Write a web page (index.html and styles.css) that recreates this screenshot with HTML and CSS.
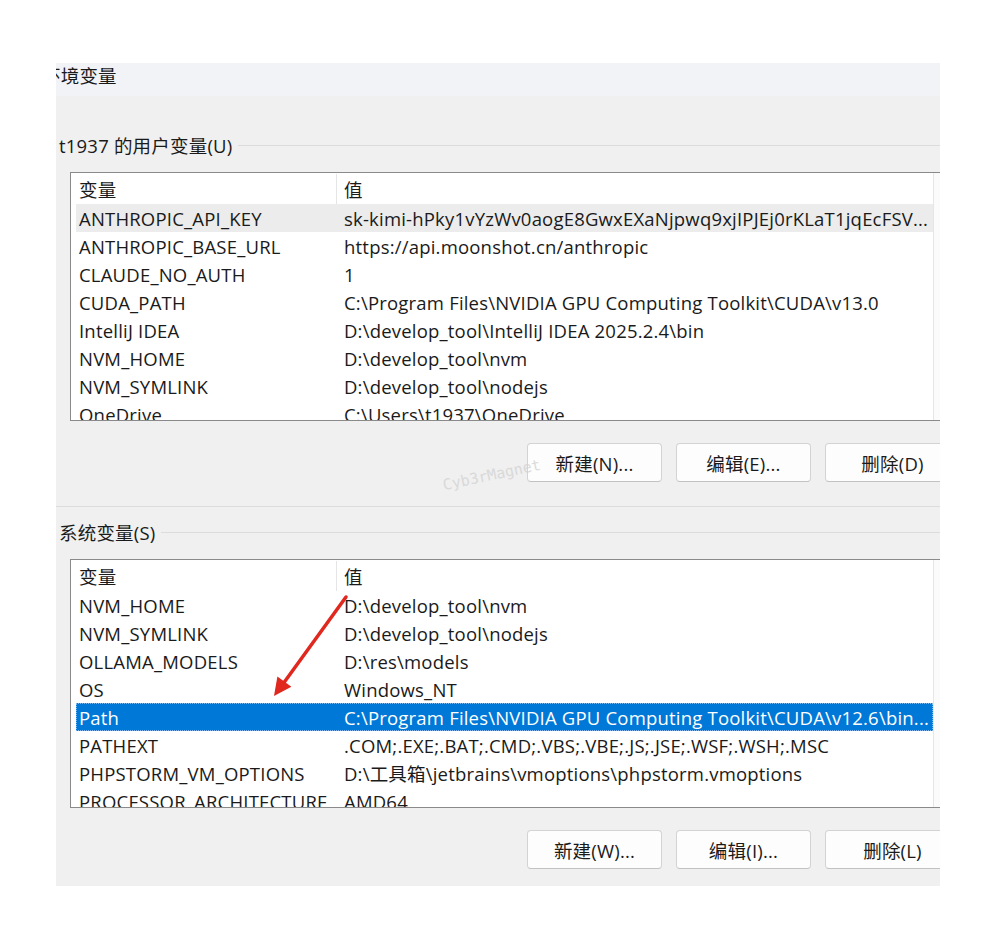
FILE: index.html
```html
<!DOCTYPE html>
<html lang="zh-CN">
<head>
    <meta charset="UTF-8">
    <meta name="viewport" content="width=device-width, initial-scale=1.0">
    <title>环境变量</title>
    <link rel="stylesheet" href="styles.css">
</head>
<body>
    <div class="window">
        <div class="titlebar"><span class="title">环境变量</span></div>

        <div class="dialog">
            <div class="group-label"><span>t1937 的用户变量(U)</span><i class="rule"></i></div>
            <div class="list">
                <div class="list-main">
                    <div class="list-head">
                        <span class="cell name">变量</span>
                        <span class="cell value">值</span>
                    </div>
                    <div class="row soft"><span class="cell name">ANTHROPIC_API_KEY</span><span class="cell value">sk-kimi-hPky1vYzWv0aogE8GwxEXaNjpwq9xjIPJEj0rKLaT1jqEcFSV...</span></div>
                    <div class="row"><span class="cell name">ANTHROPIC_BASE_URL</span><span class="cell value">https://api.moonshot.cn/anthropic</span></div>
                    <div class="row"><span class="cell name">CLAUDE_NO_AUTH</span><span class="cell value">1</span></div>
                    <div class="row"><span class="cell name">CUDA_PATH</span><span class="cell value">C:\Program Files\NVIDIA GPU Computing Toolkit\CUDA\v13.0</span></div>
                    <div class="row"><span class="cell name">IntelliJ IDEA</span><span class="cell value">D:\develop_tool\IntelliJ IDEA 2025.2.4\bin</span></div>
                    <div class="row"><span class="cell name">NVM_HOME</span><span class="cell value">D:\develop_tool\nvm</span></div>
                    <div class="row"><span class="cell name">NVM_SYMLINK</span><span class="cell value">D:\develop_tool\nodejs</span></div>
                    <div class="row"><span class="cell name">OneDrive</span><span class="cell value">C:\Users\t1937\OneDrive</span></div>
                </div>
                <div class="scrollbar"></div>
            </div>
            <div class="buttons">
                <button class="btn">新建(N)...</button>
                <button class="btn">编辑(E)...</button>
                <button class="btn">删除(D)</button>
            </div>

            <div class="divider"></div>

            <div class="group-label system"><span>系统变量(S)</span><i class="rule"></i></div>
            <div class="list">
                <div class="list-main">
                    <div class="list-head">
                        <span class="cell name">变量</span>
                        <span class="cell value">值</span>
                    </div>
                    <div class="row"><span class="cell name">NVM_HOME</span><span class="cell value">D:\develop_tool\nvm</span></div>
                    <div class="row"><span class="cell name">NVM_SYMLINK</span><span class="cell value">D:\develop_tool\nodejs</span></div>
                    <div class="row"><span class="cell name">OLLAMA_MODELS</span><span class="cell value">D:\res\models</span></div>
                    <div class="row"><span class="cell name">OS</span><span class="cell value">Windows_NT</span></div>
                    <div class="row selected"><span class="cell name">Path</span><span class="cell value">C:\Program Files\NVIDIA GPU Computing Toolkit\CUDA\v12.6\bin...</span></div>
                    <div class="row"><span class="cell name">PATHEXT</span><span class="cell value">.COM;.EXE;.BAT;.CMD;.VBS;.VBE;.JS;.JSE;.WSF;.WSH;.MSC</span></div>
                    <div class="row"><span class="cell name">PHPSTORM_VM_OPTIONS</span><span class="cell value">D:\工具箱\jetbrains\vmoptions\phpstorm.vmoptions</span></div>
                    <div class="row"><span class="cell name">PROCESSOR_ARCHITECTURE</span><span class="cell value">AMD64</span></div>
                </div>
                <div class="scrollbar"></div>
            </div>
            <div class="buttons">
                <button class="btn">新建(W)...</button>
                <button class="btn">编辑(I)...</button>
                <button class="btn">删除(L)</button>
            </div>
        </div>

        <span class="watermark">Cyb3rMagnet</span>

        <!-- red pointer towards the Path row -->
        <svg class="pointer" width="884" height="823" viewBox="0 0 884 823">
            <line x1="290" y1="534" x2="228.4" y2="619" stroke="#e0281e" stroke-width="3.5" stroke-linecap="round"/>
            <polygon points="218,633 235.4,623.8 221.4,613.6" fill="#e0281e"/>
        </svg>
    </div>
</body>
</html>
```

FILE: styles.css
```css
* { margin: 0; padding: 0; box-sizing: border-box; }
body { background: #fff; font-family: "Open Sans", "Noto Sans CJK SC", sans-serif; font-size: 18.5px; letter-spacing: 0.2px; color: #1a1a1a; }

.window { position: relative; margin: 63px 0 0 56px; width: 884px; height: 823px; overflow: hidden; background: #f0f0f0; }

.titlebar { height: 33px; background: #f2f3f7; overflow: hidden; white-space: nowrap; }
.title { display: inline-block; margin-left: -14px; line-height: 24px; }

.dialog { padding-top: 37px; }

.group-label { display: flex; align-items: center; height: 24px; padding-left: 3px; white-space: nowrap; }
.group-label .rule { flex: 1; height: 1px; background: #dcdcdc; margin-left: 6px; }
.group-label.system { margin-top: 13px; }

.list { display: flex; margin: 15px 0 0 14px; width: 880px; height: 249px; border: 1px solid #8a8a8a; background: #fff; overflow: hidden; }
.list-main { flex: 1; min-width: 0; padding-left: 5px; }
.scrollbar { width: 16px; border-left: 1px solid #e6e6e6; background: #fbfbfb; }

.list-head { display: flex; height: 31px; align-items: center; }
.list-head .name { border-right: 1px solid #e5e5e5; height: 30px; display: flex; align-items: center; }

.row { display: flex; height: 28px; align-items: center; white-space: nowrap; }
.row.soft { background: #ececec; }
.row.selected { background: #0078d7; color: #fff; outline: 1px dotted #7fbaf0; outline-offset: -1px; }

.cell { white-space: nowrap; overflow: hidden; }
.name { width: 261px; flex-shrink: 0; padding-left: 3px; }
.value { flex: 1; min-width: 0; padding-left: 7px; }

.buttons { display: flex; gap: 14px; margin-top: 22px; padding-left: 471px; }
.btn { flex-shrink: 0; width: 135px; height: 39px; font: inherit; letter-spacing: inherit; color: #1a1a1a; background: #fdfdfd; border: 1px solid #d3d3d3; border-bottom-color: #c2c2c2; border-radius: 4px; }

.divider { height: 1px; background: #dcdcdc; margin-top: 24px; }

.watermark { position: absolute; left: 386px; top: 403px; font-family: "DejaVu Sans Mono", monospace; font-size: 15px; letter-spacing: 0; color: #d4d4d4; transform: rotate(-12deg); opacity: 0.8; pointer-events: none; }

.pointer { position: absolute; top: 0; left: 0; pointer-events: none; }
```
